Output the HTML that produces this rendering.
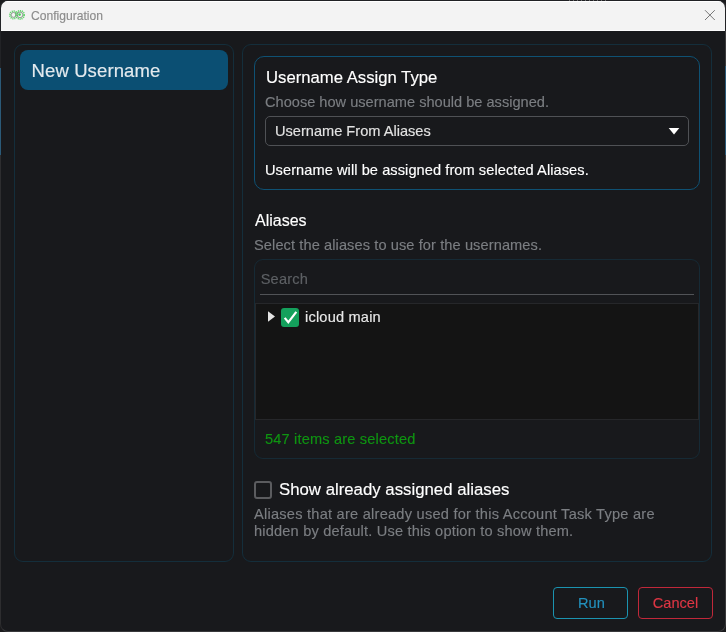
<!DOCTYPE html>
<html><head><meta charset="utf-8">
<style>
*{box-sizing:border-box;margin:0;padding:0}
html,body{width:726px;height:632px;overflow:hidden;background:#1b1b1d;}
body{font-family:"Liberation Sans",sans-serif;position:relative;color:#fff}
.abs{position:absolute}
#bgl{left:0;top:5px;width:1px;height:150px;background:linear-gradient(#222326 0,#222326 63px,#2b5a78 63px,#2b5a78 150px)}
#bgr{left:725px;top:5px;width:1px;height:150px;background:linear-gradient(#222326 0,#222326 26px,#3c3c3e 26px,#3c3c3e 61px,#2b5a78 61px,#2b5a78 150px)}
#spk{left:569px;top:0;width:40px;height:1px;background:repeating-linear-gradient(90deg,rgba(200,200,200,.45) 0,rgba(200,200,200,.45) 1px,transparent 1px,transparent 4px)}
#bgt{display:none}
#bgb{display:none}
#win{left:0;top:0;width:726px;height:632px;border:1px solid #39393b;border-top-color:#202124;border-left-color:#2d2d2f;border-radius:8px;background:#18191c;overflow:hidden}
#title{left:0;top:0;width:724px;height:30px;background:#f3f3f3;border-top:1px solid #fff;border-bottom:1px solid #fcfcfc}
.panel{border:1px solid #142e3b;border-radius:9px}
.txt{white-space:nowrap;line-height:1;-webkit-text-stroke:0.15px currentColor}
.s{font-size:14.6px}
</style></head><body>
<div id="win" class="abs">
 <div id="title" class="abs"></div>
</div>
<div id="bgl" class="abs"></div><div id="bgr" class="abs"></div><div id="spk" class="abs"></div>
<div id="ov" class="abs" style="left:0;top:0;width:726px;height:632px;will-change:transform">
  <svg class="abs" style="left:8px;top:8px" width="20" height="14" viewBox="0 0 20 14">
   <circle cx="5.5" cy="6.9" r="3.6" fill="none" stroke="#63d36c" stroke-width="1.9" stroke-dasharray="1.1 0.75"/>
   <circle cx="12" cy="6.9" r="4.05" fill="none" stroke="#63d36c" stroke-width="1.9" stroke-dasharray="1.1 0.75"/>
   <circle cx="5.5" cy="6.9" r="2.4" fill="none" stroke="#7d8c82" stroke-width="0.8"/>
   <circle cx="12" cy="6.9" r="2.8" fill="none" stroke="#7d8c82" stroke-width="0.8"/>
   <circle cx="11.6" cy="6.6" r="1.3" fill="#4ad45a"/>
   <circle cx="7.6" cy="6.9" r="0.6" fill="#63d36c"/>
  </svg>
  <div class="abs txt" style="left:31px;top:10px;font-size:12.1px;color:#8b8b8b">Configuration</div>
  <svg class="abs" style="left:704px;top:9px" width="12" height="12" viewBox="0 0 12 12"><path d="M1 1.2 L10.8 11 M10.8 1.2 L1 11" stroke="#777" stroke-width="1" fill="none"/></svg>

 <!-- left panel -->
 <div class="abs panel" style="left:14px;top:44px;width:220px;height:518px"></div>
 <div class="abs" style="left:20px;top:50px;width:208px;height:40px;background:#0b4f73;border-radius:8px"></div>
 <div class="abs txt" style="left:31.5px;top:62px;font-size:18.5px;letter-spacing:0.12px;color:#e4eaee">New Username</div>

 <!-- right panel -->
 <div class="abs panel" style="left:242px;top:44px;width:470px;height:518px"></div>

 <!-- group -->
 <div class="abs" style="left:254px;top:56px;width:446px;height:134px;border:1px solid #0f5173;border-radius:10px"></div>
 <div class="abs txt" style="left:266px;top:70px;font-size:16.7px;color:#fff">Username Assign Type</div>
 <div class="abs txt s" style="left:265px;top:95px;color:#7b7e82">Choose how username should be assigned.</div>
 <div class="abs" style="left:265px;top:116px;width:424px;height:30px;border:1px solid #4f5155;border-radius:5px"></div>
 <div class="abs txt s" style="left:275px;top:124px;color:#e2e2e2">Username From Aliases</div>
 <svg class="abs" style="left:668px;top:128.3px" width="12" height="7" viewBox="0 0 12 7"><path d="M0.7 0 H11.3 L6 6.6 Z" fill="#fff"/></svg>
 <div class="abs txt s" style="left:265px;top:163px;letter-spacing:0.07px;color:#fff">Username will be assigned from selected Aliases.</div>

 <!-- aliases -->
 <div class="abs txt" style="left:255px;top:212.5px;font-size:16px;color:#fff">Aliases</div>
 <div class="abs txt s" style="left:254px;top:238px;letter-spacing:0.095px;color:#7b7e82">Select the aliases to use for the usernames.</div>
 <div class="abs" style="left:254px;top:259px;width:446px;height:200px;border:1px solid #162a35;border-radius:9px;overflow:hidden">
   <div class="abs" style="left:0;top:43px;width:444px;height:117px;background:#141414;border:1px solid #26272a"></div>
 </div>
 <div class="abs txt s" style="left:260.7px;top:272px;letter-spacing:0.2px;color:#5d6064">Search</div>
 <div class="abs" style="left:260px;top:294px;width:434px;height:1px;background:#515357"></div>
 <svg class="abs" style="left:268px;top:311px" width="7" height="11" viewBox="0 0 7 11"><path d="M0 0.3 L7 5.5 L0 10.7 Z" fill="#e4e4e4"/></svg>
 <div class="abs" style="left:281px;top:308px;width:18px;height:19px;background:#14a05c;border-radius:3px"></div>
 <svg class="abs" style="left:281px;top:308px" width="18" height="19" viewBox="0 0 18 19"><path d="M3.7 9.9 L7.3 14.3 L15.3 3.8" stroke="#fff" stroke-width="2.2" fill="none" stroke-linecap="butt" stroke-linejoin="miter"/></svg>
 <div class="abs txt s" style="left:305px;top:310px;letter-spacing:0.19px;color:#e8e8e8">icloud main</div>
 <div class="abs txt s" style="left:265px;top:432px;letter-spacing:0.17px;color:#0f9412">547 items are selected</div>

 <!-- checkbox -->
 <div class="abs" style="left:254px;top:481px;width:18px;height:18px;border:2px solid #5b5c5f;border-radius:3px"></div>
 <div class="abs txt" style="left:279px;top:482px;font-size:16.8px;color:#fff">Show already assigned aliases</div>
 <div class="abs txt s" style="left:254px;top:507px;letter-spacing:0.24px;color:#7b7e82">Aliases that are already used for this Account Task Type are</div>
 <div class="abs txt s" style="left:254px;top:524px;letter-spacing:0.18px;color:#7b7e82">hidden by default. Use this option to show them.</div>

 <!-- buttons -->
 <div class="abs" style="left:553px;top:587px;width:75px;height:32px;border:1px solid #1b93b0;border-radius:4px"></div>
 <div class="abs txt s" style="left:554px;top:596px;width:75px;text-align:center;letter-spacing:0.1px;color:#2391bd">Run</div>
 <div class="abs" style="left:638px;top:587px;width:75px;height:32px;border:1px solid #c0283a;border-radius:4px"></div>
 <div class="abs txt s" style="left:638px;top:596px;width:75px;text-align:center;color:#dd3644">Cancel</div>
</div>
</body></html>
